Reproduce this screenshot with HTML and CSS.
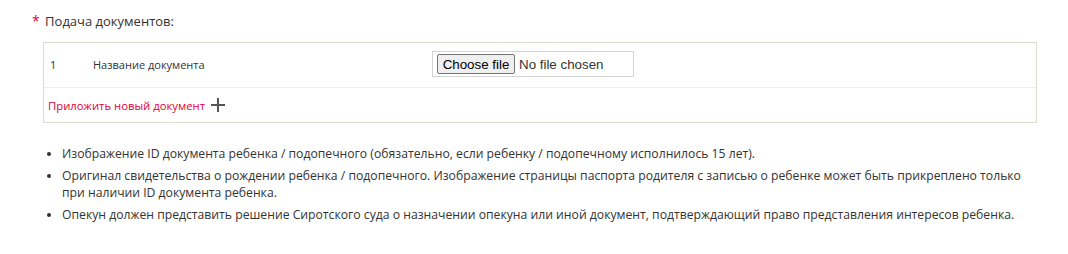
FILE: index.html
```html
<!DOCTYPE html>
<html lang="en">
<head>
    <meta charset="UTF-8">
    <title>Подача документов</title>
    <link rel="stylesheet" href="styles.css">
</head>
<body>
    <div class="docs-section">
        <div class="docs-title"><span class="required">*</span> Подача документов:</div>
        <div class="docs-box">
            <div class="docs-row">
                <div class="docs-num">1</div>
                <div class="docs-name">Название документа</div>
                <label class="file-box">
                    <input type="file" class="file-hidden">
                    <span class="file-btn">Choose file</span>
                    <span class="file-status">No file chosen</span>
                </label>
            </div>
            <div class="docs-add">
                <a href="#" class="add-link">Приложить новый документ</a>
                <span class="add-plus"></span>
            </div>
        </div>
        <ul class="docs-notes">
            <li>Изображение ID документа ребенка / подопечного (обязательно, если ребенку / подопечному исполнилось 15 лет).</li>
            <li>Оригинал свидетельства о рождении ребенка / подопечного. Изображение страницы паспорта родителя с записью о ребенке может быть прикреплено только при наличии ID документа ребенка.</li>
            <li>Опекун должен представить решение Сиротского суда о назначении опекуна или иной документ, подтверждающий право представления интересов ребенка.</li>
        </ul>
    </div>
</body>
</html>
```

FILE: styles.css
```css
body {
    margin: 0;
    font-family: "Open Sans", sans-serif;
    color: #333;
    background: #fff;
}

.docs-section {
    padding: 12px 32px 0 32px;
}

.docs-title {
    font-size: 13px;
    line-height: 18px;
    margin-bottom: 12px;
}

.required {
    color: #e4003a;
    font-size: 14px;
    margin-right: 2px;
}

.docs-box {
    margin-left: 11px;
    width: 994px;
    border: 1px solid #e0d9cf;
    box-sizing: border-box;
}

.docs-row {
    display: flex;
    align-items: center;
    height: 45px;
    padding-bottom: 2px;
    box-sizing: border-box;
    border-bottom: 1px solid #f0eeea;
    font-size: 11px;
}

.docs-num {
    width: 49px;
    padding-left: 6px;
    box-sizing: border-box;
}

.docs-name {
    width: 339px;
}

/* custom look of the file input */
.file-box {
    display: flex;
    align-items: center;
    width: 202px;
    height: 26px;
    padding-left: 4px;
    box-sizing: border-box;
    border: 1px solid #d4d4d4;
    font-family: Arial, "Liberation Sans", sans-serif;
    font-size: 13.33px;
    color: #333;
    cursor: pointer;
}

.file-hidden {
    display: none;
}

.file-btn {
    display: flex;
    align-items: center;
    justify-content: center;
    width: 78px;
    height: 20px;
    box-sizing: border-box;
    border: 1px solid #767676;
    border-radius: 2px;
    background: #efefef;
    color: #000;
}

.file-status {
    margin-left: 4px;
}

.docs-add {
    display: flex;
    align-items: center;
    height: 34px;
    padding-left: 4px;
}

.add-link {
    color: #e4003a;
    font-size: 11.3px;
    text-decoration: none;
}

.add-plus {
    position: relative;
    width: 14px;
    height: 14px;
    margin-left: 6px;
}

.add-plus::before,
.add-plus::after {
    content: "";
    position: absolute;
    background: #555;
}

.add-plus::before {
    left: 0;
    top: 6px;
    width: 14px;
    height: 2px;
}

.add-plus::after {
    left: 6px;
    top: 0;
    width: 2px;
    height: 14px;
}

.docs-notes {
    margin: 22px 0 0 0;
    padding-left: 30px;
    font-size: 12.2px;
    line-height: 17px;
}

.docs-notes li {
    margin-bottom: 5px;
}
```
